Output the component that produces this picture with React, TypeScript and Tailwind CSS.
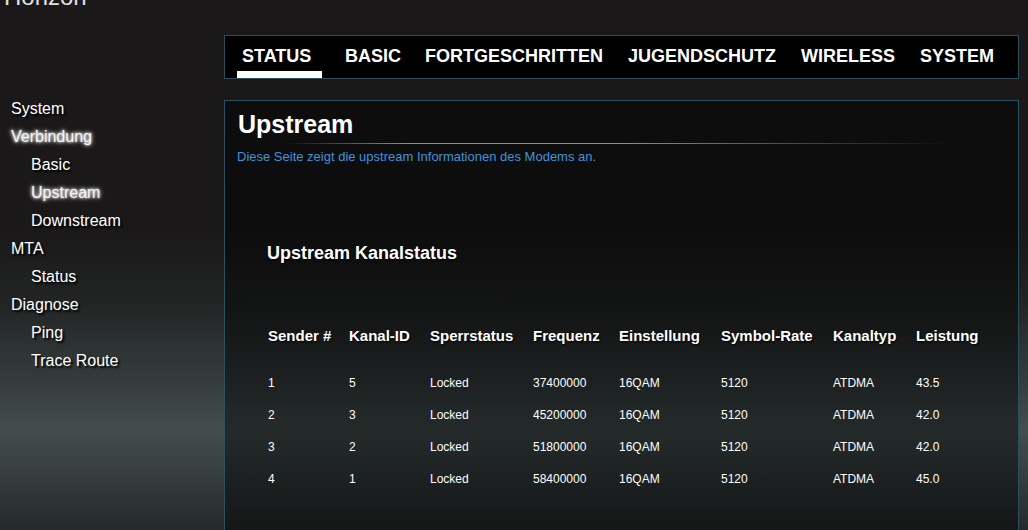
import React from "react";

const navItems = ["STATUS", "BASIC", "FORTGESCHRITTEN", "JUGENDSCHUTZ", "WIRELESS", "SYSTEM"];
const navMl = ["ml-[12px] w-[85px] pl-[5px]", "ml-[23px]", "ml-[24px]", "ml-[25px]", "ml-[25px]", "ml-[25px]"];

const side: { label: string; sub?: boolean; active?: boolean }[] = [
  { label: "System" },
  { label: "Verbindung", active: true },
  { label: "Basic", sub: true },
  { label: "Upstream", sub: true, active: true },
  { label: "Downstream", sub: true },
  { label: "MTA" },
  { label: "Status", sub: true },
  { label: "Diagnose" },
  { label: "Ping", sub: true },
  { label: "Trace Route", sub: true },
];

const headers = ["Sender #", "Kanal-ID", "Sperrstatus", "Frequenz", "Einstellung", "Symbol-Rate", "Kanaltyp", "Leistung"];
const rows = [
  ["1", "5", "Locked", "37400000", "16QAM", "5120", "ATDMA", "43.5"],
  ["2", "3", "Locked", "45200000", "16QAM", "5120", "ATDMA", "42.0"],
  ["3", "2", "Locked", "51800000", "16QAM", "5120", "ATDMA", "42.0"],
  ["4", "1", "Locked", "58400000", "16QAM", "5120", "ATDMA", "45.0"],
];

const cols = "grid grid-cols-[81px_81px_103px_86px_102px_112px_83px_80px]";

export default function App() {
  return (
    <div className="h-[530px] w-[1028px] overflow-hidden font-['Liberation_Sans',Arial,sans-serif] text-white bg-[linear-gradient(180deg,#1a1818_0px,#1a1818_230px,#222424_300px,#353c3c_380px,#434d4d_430px,#262a2a_530px)]">
      <div className="h-[35px] flex items-start">
        <div className="pl-[4px] mt-[-15px] text-[24px] leading-[24px] text-[#e2e2e2]">Horizon</div>
      </div>
      <div className="flex">
        <div className="w-[224px] shrink-0 pt-[60px]">
          {side.map((s) => (
            <div
              key={s.label}
              className={`h-[28px] leading-[28px] text-[16px] ${s.sub ? "pl-[31px]" : "pl-[11px]"} ${
                s.active
                  ? "text-[#f4f4f4] [text-shadow:0_0_3px_#fff,0_0_5px_#fff]"
                  : "text-white [text-shadow:2px_2px_2px_#000]"
              }`}
            >
              {s.label}
            </div>
          ))}
        </div>
        <div className="mr-[9px] flex-1 flex flex-col">
          <div className="h-[44px] border border-[#2c4d5c] bg-black flex items-stretch">
            {navItems.map((n, i) => (
              <div
                key={n}
                className={`relative flex items-center pb-[3px] text-[18px] font-bold leading-[20px] [text-shadow:1px_1px_2px_#000] ${navMl[i]}`}
              >
                {n}
                {i === 0 && <div className="absolute bottom-0 left-0 right-0 h-[7px] bg-white" />}
              </div>
            ))}
          </div>
          <div className="mt-[21px] h-[460px] border border-[#2b5063] bg-black/45">
            <div className="pl-[13px] pt-[8px]">
              <div className="text-[25px] leading-[30px] font-bold">Upstream</div>
            </div>
            <div className="mt-[4px] h-[1px] w-[725px] bg-[linear-gradient(90deg,transparent_0%,transparent_8%,#4b9ee0_25%,#4b9ee0_55%,#2c5f85_75%,transparent_100%)]" />
            <div className="pl-[12px] mt-[5px] text-[13px] leading-[16px] text-[#4093dc]">
              Diese Seite zeigt die upstream Informationen des Modems an.
            </div>
            <div className="pl-[42px] mt-[77px] text-[18px] leading-[22px] font-bold [text-shadow:1px_1px_2px_#000]">
              Upstream Kanalstatus
            </div>
            <div className="pl-[43px] mt-[63px]">
              <div className={`${cols} text-[15px] leading-[18px] font-bold [text-shadow:1px_1px_2px_#000]`}>
                {headers.map((h) => (
                  <div key={h}>{h}</div>
                ))}
              </div>
              <div className="mt-[22px]">
                {rows.map((r, i) => (
                  <div key={i} className={`${cols} h-[32px] items-center text-[12px] leading-[14px]`}>
                    {r.map((c, j) => (
                      <div key={j}>{c}</div>
                    ))}
                  </div>
                ))}
              </div>
            </div>
          </div>
        </div>
      </div>
    </div>
  );
}
